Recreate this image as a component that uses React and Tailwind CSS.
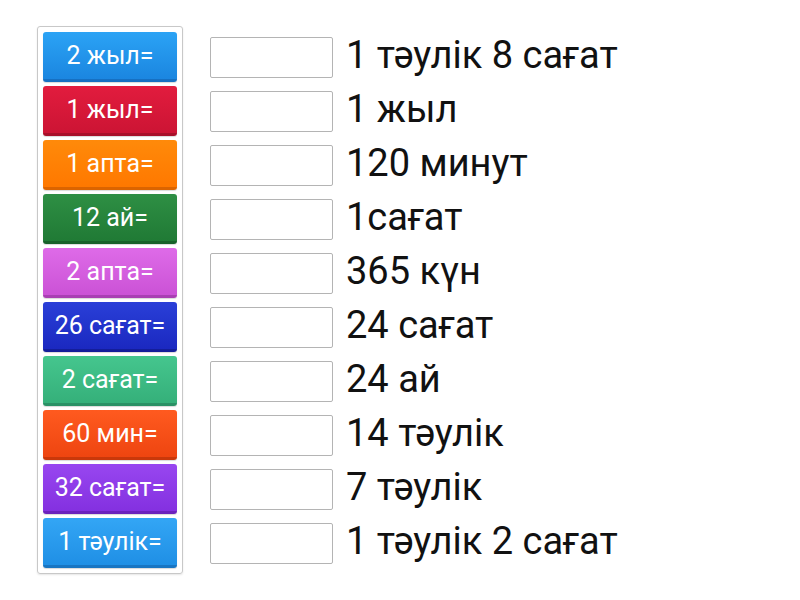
import React from "react";

const tiles = [
  { label: "2 жыл=", cls: "from-[#2ba3f5] to-[#1b86e0] border-[#1670c2]" },
  { label: "1 жыл=", cls: "from-[#e21c3e] to-[#cc1434] border-[#a80f29]" },
  { label: "1 апта=", cls: "from-[#ff8a0a] to-[#ff7800] border-[#dc6400]" },
  { label: "12 ай=", cls: "from-[#2e8f44] to-[#207a35] border-[#18612a]" },
  { label: "2 апта=", cls: "from-[#de6be8] to-[#cb52d6] border-[#a93fb3]" },
  { label: "26 сағат=", cls: "from-[#2a3fd8] to-[#1b28c0] border-[#141e9a]" },
  { label: "2 сағат=", cls: "from-[#45c68e] to-[#35b07a] border-[#2a9165]" },
  { label: "60 мин=", cls: "from-[#ff5a1f] to-[#ee4510] border-[#c9380a]" },
  { label: "32 сағат=", cls: "from-[#9846f0] to-[#8430e0] border-[#6b22bd]" },
  { label: "1 тәулік=", cls: "from-[#33a6f5] to-[#1f8fe5] border-[#1875c2]" },
];

const answers = [
  "1 тәулік 8 сағат",
  "1 жыл",
  "120 минут",
  "1сағат",
  "365 күн",
  "24 сағат",
  "24 ай",
  "14 тәулік",
  "7 тәулік",
  "1 тәулік 2 сағат",
];

export default function App() {
  return (
    <div className="flex h-[600px] w-[800px] items-start bg-white pl-[37px] pt-[26px] font-['Roboto',sans-serif]">
      {/* Tiles */}
      <div className="flex w-[146px] flex-col gap-[4px] rounded-[3px] border border-[#c8c8c8] p-[5px] shadow-[0_1px_2px_rgba(0,0,0,0.1)]">
        {tiles.map((t) => (
          <div
            key={t.label}
            className={`flex h-[50px] items-center justify-center rounded-[3px] border-b-[3px] bg-gradient-to-b text-[25px] text-white shadow-[0_1px_1px_rgba(0,0,0,0.15)] ${t.cls}`}
          >
            {t.label}
          </div>
        ))}
      </div>

      {/* Answer rows */}
      <div className="ml-[27px] flex flex-col gap-[4px] pt-[6px]">
        {answers.map((a) => (
          <div key={a} className="flex h-[50px] items-center gap-[13px]">
            <div className="h-[41px] w-[123px] rounded-[2px] border border-[#b4b4b4] bg-white" />
            <span className="-mt-[4px] text-[38px] leading-none text-[#111]">{a}</span>
          </div>
        ))}
      </div>
    </div>
  );
}
